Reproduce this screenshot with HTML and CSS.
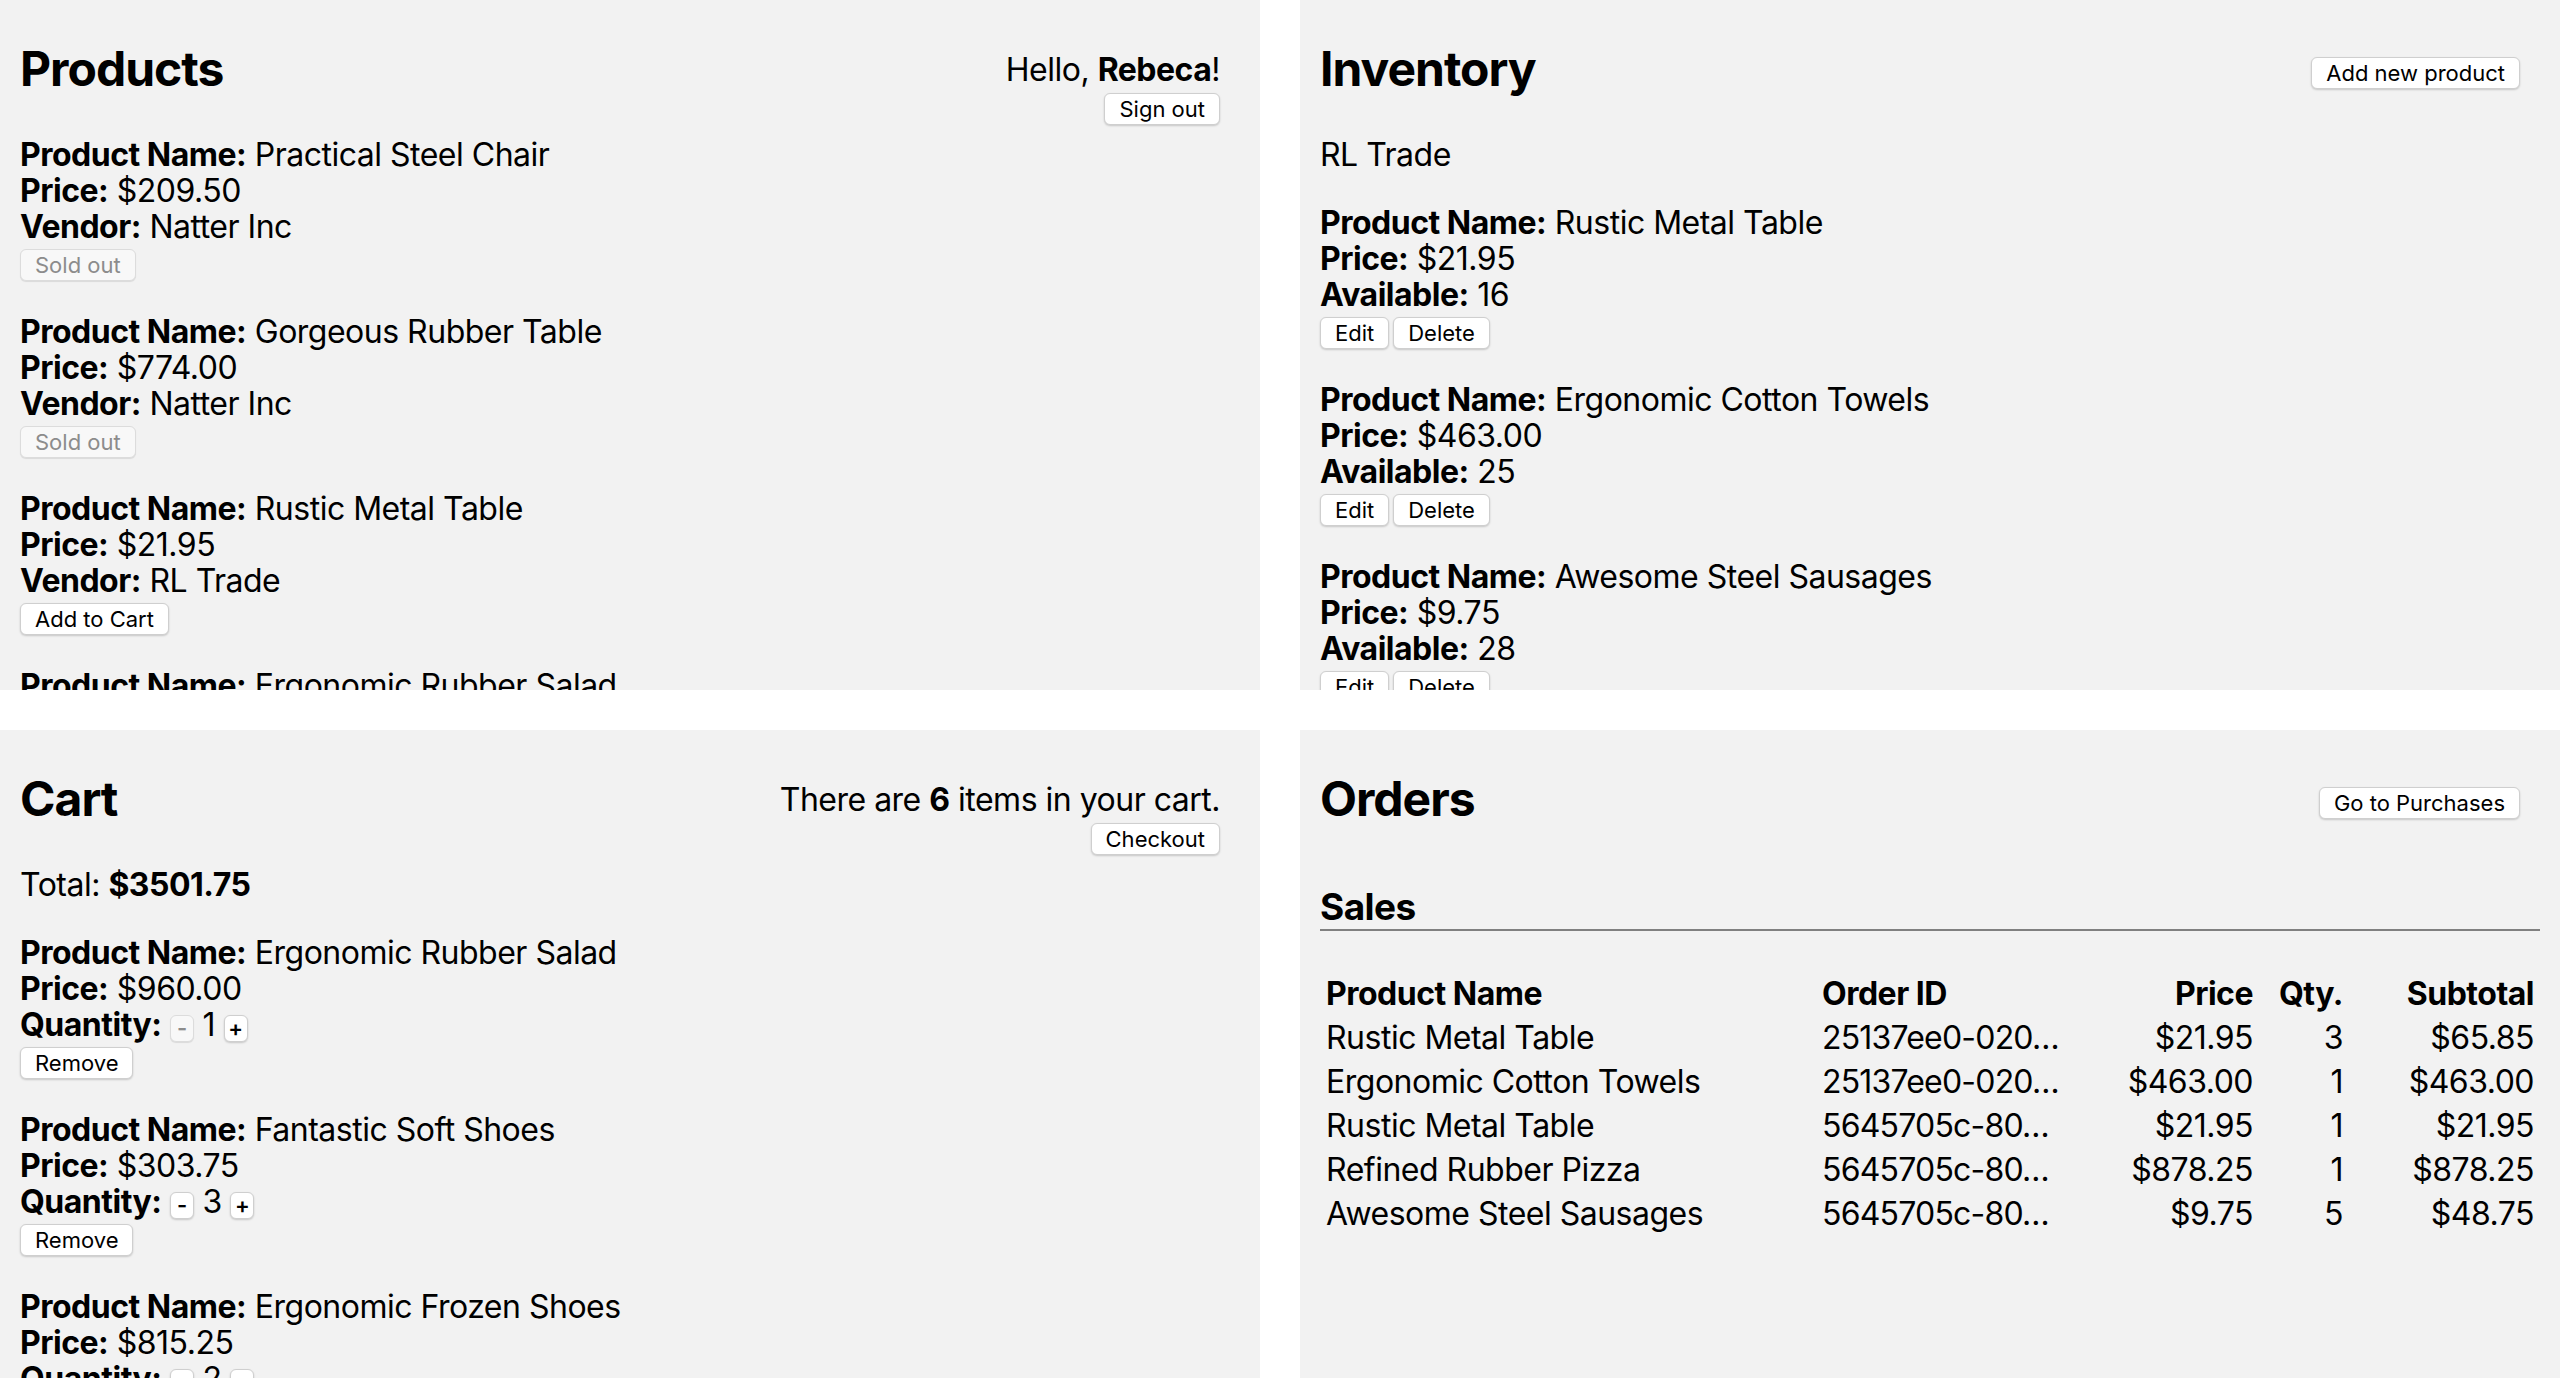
FILE: index.html
```html
<!DOCTYPE html>
<html lang="en">
<head>
<meta charset="utf-8">
<title>Marketplace</title>
<link rel="stylesheet" href="styles.css">
</head>
<body>
<main class="board">

  <section class="panel">
    <header class="panel-head">
      <h1 class="title">Products</h1>
      <div class="aside">
        <div class="aside-text">Hello, <b>Rebeca</b>!</div>
        <button class="btn aside-btn">Sign out</button>
      </div>
    </header>
    <div class="item">
      <div class="line"><b>Product Name:</b> Practical Steel Chair</div>
      <div class="line"><b>Price:</b> $209.50</div>
      <div class="line"><b>Vendor:</b> Natter Inc</div>
      <div class="actions"><button class="btn" disabled>Sold out</button></div>
    </div>
    <div class="item">
      <div class="line"><b>Product Name:</b> Gorgeous Rubber Table</div>
      <div class="line"><b>Price:</b> $774.00</div>
      <div class="line"><b>Vendor:</b> Natter Inc</div>
      <div class="actions"><button class="btn" disabled>Sold out</button></div>
    </div>
    <div class="item">
      <div class="line"><b>Product Name:</b> Rustic Metal Table</div>
      <div class="line"><b>Price:</b> $21.95</div>
      <div class="line"><b>Vendor:</b> RL Trade</div>
      <div class="actions"><button class="btn">Add to Cart</button></div>
    </div>
    <div class="item">
      <div class="line"><b>Product Name:</b> Ergonomic Rubber Salad</div>
      <div class="line"><b>Price:</b> $960.00</div>
      <div class="line"><b>Vendor:</b> RL Trade</div>
      <div class="actions"><button class="btn">Add to Cart</button></div>
    </div>
  </section>

  <section class="panel">
    <header class="panel-head">
      <h1 class="title">Inventory</h1>
      <button class="btn head-btn">Add new product</button>
    </header>
    <div class="note">RL Trade</div>
    <div class="item">
      <div class="line"><b>Product Name:</b> Rustic Metal Table</div>
      <div class="line"><b>Price:</b> $21.95</div>
      <div class="line"><b>Available:</b> 16</div>
      <div class="actions"><button class="btn">Edit</button><button class="btn">Delete</button></div>
    </div>
    <div class="item">
      <div class="line"><b>Product Name:</b> Ergonomic Cotton Towels</div>
      <div class="line"><b>Price:</b> $463.00</div>
      <div class="line"><b>Available:</b> 25</div>
      <div class="actions"><button class="btn">Edit</button><button class="btn">Delete</button></div>
    </div>
    <div class="item">
      <div class="line"><b>Product Name:</b> Awesome Steel Sausages</div>
      <div class="line"><b>Price:</b> $9.75</div>
      <div class="line"><b>Available:</b> 28</div>
      <div class="actions"><button class="btn">Edit</button><button class="btn">Delete</button></div>
    </div>
  </section>

  <section class="panel">
    <header class="panel-head">
      <h1 class="title">Cart</h1>
      <div class="aside">
        <div class="aside-text">There are <b>6</b> items in your cart.</div>
        <button class="btn aside-btn">Checkout</button>
      </div>
    </header>
    <div class="note">Total: <b>$3501.75</b></div>
    <div class="item">
      <div class="line"><b>Product Name:</b> Ergonomic Rubber Salad</div>
      <div class="line"><b>Price:</b> $960.00</div>
      <div class="line"><b>Quantity:</b> <button class="btn qty-btn" disabled>-</button> 1 <button class="btn qty-btn">+</button></div>
      <div class="actions"><button class="btn">Remove</button></div>
    </div>
    <div class="item">
      <div class="line"><b>Product Name:</b> Fantastic Soft Shoes</div>
      <div class="line"><b>Price:</b> $303.75</div>
      <div class="line"><b>Quantity:</b> <button class="btn qty-btn">-</button> 3 <button class="btn qty-btn">+</button></div>
      <div class="actions"><button class="btn">Remove</button></div>
    </div>
    <div class="item">
      <div class="line"><b>Product Name:</b> Ergonomic Frozen Shoes</div>
      <div class="line"><b>Price:</b> $815.25</div>
      <div class="line"><b>Quantity:</b> <button class="btn qty-btn">-</button> 2 <button class="btn qty-btn">+</button></div>
      <div class="actions"><button class="btn">Remove</button></div>
    </div>
  </section>

  <section class="panel">
    <header class="panel-head">
      <h1 class="title">Orders</h1>
      <button class="btn head-btn">Go to Purchases</button>
    </header>
    <h3 class="sales-title">Sales</h3>
    <table class="sales">
      <colgroup>
        <col class="c-name"><col class="c-id"><col class="c-price"><col class="c-qty"><col class="c-sub">
      </colgroup>
      <thead>
        <tr><th>Product Name</th><th>Order ID</th><th class="num">Price</th><th class="num">Qty.</th><th class="num">Subtotal</th></tr>
      </thead>
      <tbody>
        <tr><td>Rustic Metal Table</td><td><span class="oid" title="25137ee0-0204-4c1e-9b7a-5d2f8e61a0c3">25137ee0-020…</span></td><td class="num">$21.95</td><td class="num">3</td><td class="num">$65.85</td></tr>
        <tr><td>Ergonomic Cotton Towels</td><td><span class="oid" title="25137ee0-0204-4c1e-9b7a-5d2f8e61a0c3">25137ee0-020…</span></td><td class="num">$463.00</td><td class="num">1</td><td class="num">$463.00</td></tr>
        <tr><td>Rustic Metal Table</td><td><span class="oid" title="5645705c-80a1-4f3d-8e2b-17c9d04b6e52">5645705c-80…</span></td><td class="num">$21.95</td><td class="num">1</td><td class="num">$21.95</td></tr>
        <tr><td>Refined Rubber Pizza</td><td><span class="oid" title="5645705c-80a1-4f3d-8e2b-17c9d04b6e52">5645705c-80…</span></td><td class="num">$878.25</td><td class="num">1</td><td class="num">$878.25</td></tr>
        <tr><td>Awesome Steel Sausages</td><td><span class="oid" title="5645705c-80a1-4f3d-8e2b-17c9d04b6e52">5645705c-80…</span></td><td class="num">$9.75</td><td class="num">5</td><td class="num">$48.75</td></tr>
      </tbody>
    </table>
  </section>

</main>
</body>
</html>
```

FILE: styles.css
```css
* { box-sizing: border-box; }

html, body {
  margin: 0;
  padding: 0;
  background: #ffffff;
}

body {
  font-family: Inter, "Noto Sans", sans-serif;
  font-size: 32px;
  letter-spacing: -0.5px;
  color: #000;
  height: 1378px;
  overflow: hidden;
}

.board {
  display: grid;
  grid-template-columns: 1260px 1260px;
  grid-template-rows: 690px 690px;
  column-gap: 40px;
  row-gap: 40px;
}

.panel {
  background: #f2f2f2;
  padding: 20px;
  overflow: hidden;
}

/* buttons */
.btn {
  font-family: Inter, "Noto Sans", sans-serif;
  font-size: 22px;
  letter-spacing: 0;
  color: #000;
  background: #ffffff;
  border: 1px solid #cfcfcf;
  border-radius: 6px;
  box-shadow: 0 1px 2px rgba(0, 0, 0, 0.18);
  height: 32px;
  line-height: 30px;
  padding: 0 14px;
  margin: 0;
}

.btn:disabled {
  color: #8c8c8c;
  background: #f8f8f8;
  border-color: #dcdcdc;
  box-shadow: 0 1px 1px rgba(0, 0, 0, 0.1);
}

.qty-btn {
  height: 27px;
  width: 24px;
  line-height: 25px;
  padding: 0;
  font-weight: 600;
  vertical-align: baseline;
}

/* header */
.panel-head {
  display: flex;
  justify-content: space-between;
  align-items: flex-start;
  padding-right: 20px;
  height: 117px;
}

.title {
  margin: 20px 0 0;
  font-size: 48px;
  line-height: 58px;
  font-weight: 700;
  letter-spacing: -1px;
}

.aside {
  margin-top: 32px;
  display: flex;
  flex-direction: column;
  align-items: flex-end;
}

.aside-text {
  line-height: 36px;
  white-space: nowrap;
}

.aside .aside-btn { margin-top: 5px; }

.panel-head .head-btn { margin-top: 37px; }

/* content */
.note {
  line-height: 36px;
  margin-bottom: 32px;
}

.item { margin-bottom: 32px; }

.line {
  line-height: 36px;
  white-space: nowrap;
}

.actions {
  display: flex;
  gap: 4px;
  height: 37px;
  padding-top: 4px;
}

/* orders */
.sales-title {
  margin: 22px 0 0;
  font-size: 37px;
  font-weight: 700;
  letter-spacing: -0.6px;
  line-height: 36px;
  padding-bottom: 4px;
  border-bottom: 2px solid #808080;
}

.sales {
  margin-top: 41px;
  width: 100%;
  table-layout: fixed;
  border-collapse: collapse;
}

.c-name { width: 496px; }
.c-id { width: 252px; }
.c-price { width: 191px; }
.c-qty { width: 90px; }
.c-sub { width: 191px; }

.sales th,
.sales td {
  padding: 4px 6px;
  line-height: 36px;
  white-space: nowrap;
  overflow: hidden;
  text-align: left;
}

.sales th { font-weight: 700; }

.sales .num { text-align: right; }

.oid { letter-spacing: -0.8px; }
```
